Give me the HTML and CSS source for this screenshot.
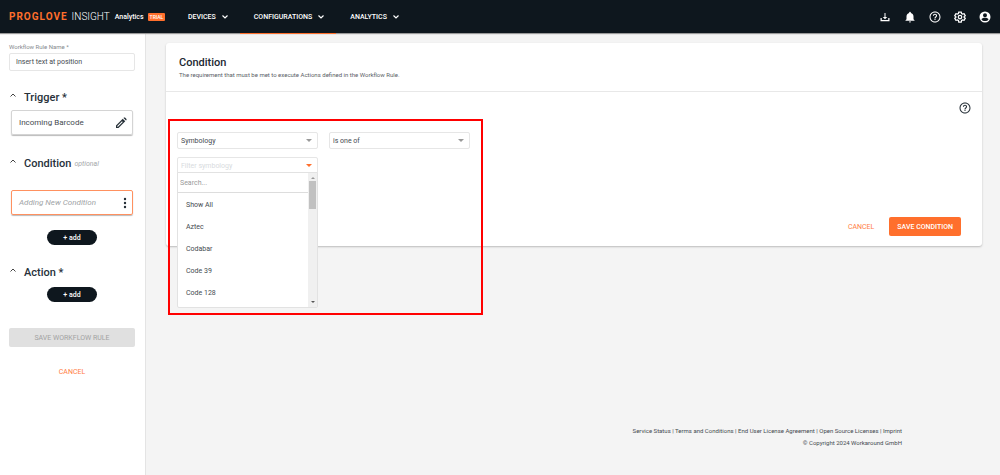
FILE: index.html
```html
<!DOCTYPE html>
<html lang="en">
<head>
<meta charset="utf-8">
<title>PROGLOVE INSIGHT</title>
<link rel="stylesheet" href="styles.css">
</head>
<body>
<header class="topbar">
  <div class="brand"><span class="brand-name">PROGLOVE</span><span class="brand-product">INSIGHT</span><span class="brand-plan">Analytics</span><span class="badge">TRIAL</span></div>
  <nav class="nav">
    <button class="nav-item">DEVICES <svg class="chevron" viewBox="0 0 8 6"><path d="M1.500 1.500 4 4l2.500-2.500"/></svg></button>
    <button class="nav-item active">CONFIGURATIONS <svg class="chevron" viewBox="0 0 8 6"><path d="M1.500 1.500 4 4l2.500-2.500"/></svg></button>
    <button class="nav-item">ANALYTICS <svg class="chevron" viewBox="0 0 8 6"><path d="M1.500 1.500 4 4l2.500-2.500"/></svg></button>
  </nav>
  <div class="tools">
    <button class="icon-btn" aria-label="Downloads"><svg class="icon" viewBox="0 0 24 24"><path d="M11 4h2v8h3.500L12 16.500 7.500 12H11zM3 14h2.500v4h13v-4H21v6.500H3z"/></svg></button>
    <button class="icon-btn" aria-label="Notifications"><svg class="icon" viewBox="0 0 24 24"><path d="M12 23a2.200 2.200 0 0 0 2.200-2.200H9.800A2.200 2.200 0 0 0 12 23zm7-6.500V11c0-3.400-2-6.300-5.300-7V3a1.700 1.700 0 0 0-3.400 0v1C7 4.700 5 7.600 5 11v5.500l-2 2v1h18v-1z"/></svg></button>
    <button class="icon-btn" aria-label="Help"><svg class="icon" viewBox="0 0 24 24"><path d="M11 18h2v-2h-2v2zm1-17C5.900 1 1 5.900 1 12s4.900 11 11 11 11-4.900 11-11S18.100 1 12 1zm0 20c-5 0-9-4-9-9s4-9 9-9 9 4 9 9-4 9-9 9zm0-15.500c-2.300 0-4.200 1.800-4.200 4.200h2.200c0-1.200.9-2 2-2s2 .8 2 2c0 2-3.200 1.900-3.200 5.300h2.300c0-2.300 3.100-2.700 3.100-5.300 0-2.400-1.900-4.200-4.200-4.200z"/></svg></button>
    <button class="icon-btn" aria-label="Settings"><svg class="icon gear" viewBox="0 0 24 24"><path d="m9.500 2-.6 3-2.200 1.300L3.800 5.300 1.500 9.400 3.700 11.300v1.400L1.500 14.600l2.300 4.100 2.900-1L8.900 19l.6 3h5l.6-3 2.200-1.300 2.900 1 2.300-4.100-2.200-1.900v-1.400l2.200-1.900-2.300-4.100-2.900 1L15.100 5l-.6-3z"/><circle cx="12" cy="12" r="3.500"/></svg></button>
    <button class="icon-btn" aria-label="Account"><svg class="icon" viewBox="0 0 24 24"><path fill-rule="evenodd" d="M12 1a11 11 0 1 0 0 22 11 11 0 0 0 0-22zm0 3.500a4 4 0 1 1 0 8 4 4 0 0 1 0-8zM5 17c.5-5 13.500-5 14 0-2.600 4.300-11.400 4.300-14 0z"/></svg></button>
  </div>
</header>
<div class="layout">
  <aside class="sidebar">
    <label class="field-label" for="rule-name">Workflow Rule Name *</label>
    <input class="text-input" id="rule-name" value="Insert text at position">
    <section class="step">
      <h2 class="step-title"><svg class="caret" viewBox="0 0 8 6"><path d="M1.500 4.500 4 2l2.500 2.500"/></svg>Trigger *</h2>
      <div class="step-card">Incoming Barcode
        <button class="card-btn" aria-label="Edit trigger"><svg class="icon" viewBox="0 0 24 24"><path fill-rule="evenodd" d="M2 22v-5L15.500 3.500l5 5L7 22zM4.500 18v1.500H6L15.500 10 14 8.500zM17 2l1-1h2l3 3v2l-1 1z"/></svg></button>
      </div>
    </section>
    <section class="step condition-step">
      <h2 class="step-title"><svg class="caret" viewBox="0 0 8 6"><path d="M1.500 4.500 4 2l2.500 2.500"/></svg>Condition <em class="optional">optional</em></h2>
      <div class="step-card current">Adding New Condition
        <button class="card-btn" aria-label="Condition options"><svg class="dots" viewBox="0 0 4 12"><circle cx="2" cy="2" r="1.200"/><circle cx="2" cy="6" r="1.200"/><circle cx="2" cy="10" r="1.200"/></svg></button>
      </div>
      <button class="add-btn">+ add</button>
    </section>
    <section class="step action-step">
      <h2 class="step-title"><svg class="caret" viewBox="0 0 8 6"><path d="M1.500 4.500 4 2l2.500 2.500"/></svg>Action *</h2>
      <button class="add-btn">+ add</button>
    </section>
    <button class="save-rule" disabled>SAVE WORKFLOW RULE</button>
    <button class="link-btn">CANCEL</button>
  </aside>
  <main class="main">
    <section class="panel">
      <header class="panel-head">
        <h1 class="panel-title">Condition</h1>
        <p class="panel-text">The requirement that must be met to execute Actions defined in the Workflow Rule.</p>
      </header>
      <div class="panel-body">
        <button class="help-btn" aria-label="Condition help"><svg class="icon" viewBox="0 0 24 24"><path d="M11 18h2v-2h-2v2zm1-17C5.900 1 1 5.900 1 12s4.900 11 11 11 11-4.900 11-11S18.100 1 12 1zm0 20c-5 0-9-4-9-9s4-9 9-9 9 4 9 9-4 9-9 9zm0-15.500c-2.300 0-4.200 1.800-4.200 4.200h2.200c0-1.200.9-2 2-2s2 .8 2 2c0 2-3.200 1.900-3.200 5.300h2.300c0-2.300 3.100-2.700 3.100-5.300 0-2.400-1.900-4.200-4.200-4.200z"/></svg></button>
        <div class="builder">
          <div class="picker"><select class="select" aria-label="Property"><option>Symbology</option></select><span class="arrow"></span></div>
          <div class="picker"><select class="select" aria-label="Operator"><option>is one of</option></select><span class="arrow"></span></div>
          <div class="picker open">
            <input class="select" placeholder="Filter symbology" aria-label="Filter symbology"><span class="arrow"></span>
            <div class="menu">
              <div class="menu-content">
                <input class="search" placeholder="Search..." aria-label="Search">
                <ul class="options" role="listbox" aria-label="Symbology">
                  <li class="option" role="option">Show All</li>
                  <li class="option" role="option">Aztec</li>
                  <li class="option" role="option">Codabar</li>
                  <li class="option" role="option">Code 39</li>
                  <li class="option" role="option">Code 128</li>
                </ul>
              </div>
              <div class="scrollbar"><span class="scroll-up"></span><span class="thumb"></span><span class="scroll-down"></span></div>
            </div>
          </div>
          <div class="highlight"></div>
        </div>
        <div class="actions">
          <button class="link-btn">CANCEL</button>
          <button class="primary-btn">SAVE CONDITION</button>
        </div>
      </div>
    </section>
    <footer class="footer">
      <div><a href="#">Service Status</a> | <a href="#">Terms and Conditions</a> | <a href="#">End User License Agreement</a> | <a href="#">Open Source Licenses</a> | <a href="#">Imprint</a></div>
      <div>© Copyright 2024 Workaround GmbH</div>
    </footer>
  </main>
</div>
</body>
</html>
```
FILE: styles.css
```css
* { box-sizing: border-box; }
body {
  margin: 0;
  min-height: 100vh;
  display: flex;
  flex-direction: column;
  background: #f4f4f4;
  color: #454b51;
  font: 7px/10px Roboto, sans-serif;
}
button, input, select { font: inherit; color: inherit; margin: 0; padding: 0; border: 0; background: none; }
button { cursor: pointer; }
h1, h2, p, ul { margin: 0; padding: 0; }
a { color: inherit; text-decoration: none; }
svg { display: block; }

.topbar {
  display: flex;
  align-items: center;
  height: 33px;
  padding: 0 9px;
  background: #0e171e;
  color: #fff;
  box-shadow: 0 1px 1px #999;
  z-index: 1;
}
.brand { display: flex; align-items: center; width: 171px; }
.brand-name { color: #ff6f2c; font-size: 10px; font-weight: 700; letter-spacing: 1px; }
.brand-product { margin-left: 4px; font-size: 10px; font-weight: 300; }
.brand-plan { margin-left: 5px; font-weight: 500; }
.badge { margin-left: 4px; padding: 0 2px; background: #ff6f2c; border-radius: 1px; font-size: 5px; line-height: 8px; font-weight: 500; }
.nav { display: flex; align-self: stretch; }
.nav-item { display: flex; align-items: center; gap: 5px; padding: 0 8px; margin-right: 9px; font-weight: 500; position: relative; }
.nav-item.active::after { content: ""; position: absolute; left: -6px; right: -3px; bottom: -1px; height: 1px; background: #ff6f2c; }
.chevron { width: 8px; height: 6px; fill: none; stroke: #fff; stroke-width: 1.2; }
.tools { display: flex; gap: 13px; margin-left: auto; }
.icon { width: 12px; height: 12px; fill: currentColor; }
.gear { fill: none; stroke: currentColor; stroke-width: 2.5; }

.layout { display: flex; flex: 1; }
.sidebar {
  display: flex;
  flex-direction: column;
  flex: 0 0 146px;
  padding: 9px 10px 0 9px;
  background: #fff;
  border-right: 1px solid #e4e4e4;
}
.field-label { font-size: 6px; color: #858a8e; }
.text-input { height: 18px; margin-top: 1px; padding: 0 6px; border: 1px solid #e6e6e6; border-radius: 2px; background: #fff; }
.step { display: flex; flex-direction: column; margin-top: 19px; padding: 0 2px; }
.condition-step { margin-top: 21px; }
.action-step { margin-top: 20px; }
.step-title { display: flex; align-items: center; font-size: 11px; line-height: 16px; font-weight: 500; color: #27313a; }
.caret { width: 8px; height: 6px; margin: -6px 7px 0 -2px; fill: none; stroke: #444; stroke-width: 1; }
.optional { margin-left: 3px; font-size: 7px; font-weight: 400; color: #a5a8aa; }
.step-card {
  display: flex;
  align-items: center;
  justify-content: space-between;
  height: 25px;
  margin-top: 4px;
  padding: 0 5px 0 7px;
  border: 1px solid #d4d4d4;
  border-radius: 2px;
  box-shadow: 0 1px 1px #bbb;
  font-size: 8px;
}
.step-card.current { margin-top: 18px; border-color: #ff9160; color: #a0a3a6; font-style: italic; }
.card-btn { color: #242e36; }
.dots { width: 4px; height: 12px; fill: currentColor; }
.add-btn { align-self: center; width: 50px; height: 15px; margin-top: 15px; border-radius: 8px; background: #0e171e; color: #fff; font-weight: 500; }
.action-step .add-btn { margin-top: 6px; }
.save-rule { height: 19px; margin-top: 26px; border-radius: 2px; background: #e0e0e0; color: #a2a2a2; }
.link-btn { color: #ff7d43; font-size: 7px; }
.sidebar .link-btn { align-self: center; margin-top: 20px; }

.main { display: flex; flex: 1; flex-direction: column; min-width: 0; padding: 10px 18px 26px 20px; }
.panel { background: #fff; border-radius: 3px; box-shadow: 0 1px 2px #bbb; }
.panel-head { padding: 13px 13px 11px; border-bottom: 1px solid #e8e8e8; }
.panel-title { font-size: 11px; line-height: 14px; font-weight: 500; color: #1d2831; }
.panel-text { font-size: 6px; color: #5a6066; }
.panel-body { display: flex; flex-direction: column; padding: 10px 21px 10px 11px; }
.help-btn { align-self: flex-end; margin-right: -10px; color: #242e36; }
.builder { position: relative; display: grid; grid-template-columns: 141px 141px; gap: 8px 11px; margin-top: 18px; width: max-content; }
.picker { position: relative; display: flex; }
.select { width: 100%; height: 17px; padding: 0 3px; appearance: none; border: 1px solid #e6e6e6; border-radius: 2px; background: #fff; }
.select::placeholder { color: #d8dbde; opacity: 1; }
.arrow { position: absolute; right: 6px; top: 7px; border: 3px solid transparent; border-top-color: #999; border-bottom: 0; pointer-events: none; }
.open .arrow { border-top-color: #ff6f2c; }
.menu { position: absolute; top: 15px; left: 0; right: 0; display: flex; background: #fff; border: 1px solid #e2e2e2; border-radius: 0 0 2px 2px; }
.menu-content { flex: 1; }
.search { display: block; width: 100%; height: 20px; padding: 0 2px; border-bottom: 1px solid #ddd; }
.search::placeholder { color: #999; opacity: 1; }
.options { list-style: none; padding: 1px 0 3px; }
.option { padding: 0 8px; line-height: 22px; }
.scrollbar { display: flex; flex-direction: column; align-items: center; width: 9px; padding: 4px 0; background: #f0f0f0; }
.scroll-up { border: 2px solid transparent; border-top: 0; border-bottom-color: #999; }
.scroll-down { margin-top: auto; border: 2px solid transparent; border-bottom: 0; border-top-color: #555; }
.thumb { width: 7px; height: 28px; margin-top: 2px; background: #c1c1c1; }
.highlight { position: absolute; inset: -13px -13px -141px -9px; border: 2px solid #f00; pointer-events: none; }
.actions { display: flex; justify-content: flex-end; align-items: center; gap: 15px; margin-top: 43px; }
.primary-btn { height: 19px; padding: 0 8px; border-radius: 2px; background: #ff6f2c; color: #fff; font-weight: 500; }
.footer { margin-top: auto; padding-right: 80px; text-align: right; font-size: 6px; line-height: 12px; }
```
